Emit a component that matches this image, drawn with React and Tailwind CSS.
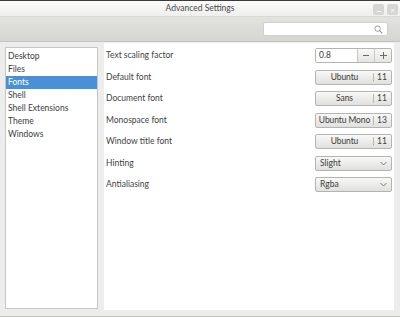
import { useState } from 'react'

const categories = ['Desktop', 'Files', 'Fonts', 'Shell', 'Shell Extensions', 'Theme', 'Windows']

const fontRows = [
  { label: 'Default font', name: 'Ubuntu', size: 11 },
  { label: 'Document font', name: 'Sans', size: 11 },
  { label: 'Monospace font', name: 'Ubuntu Mono', size: 13 },
  { label: 'Window title font', name: 'Ubuntu', size: 11 },
]

const btn = 'h-[15px] rounded-[2px] border border-[#b4b4b0] bg-gradient-to-b from-[#f8f8f7] to-[#e0e0de] text-[#3c3c3c]'

function Chevron() {
  return (
    <svg width="7" height="5" viewBox="0 0 7 5" className="text-[#7a7a7a]">
      <path d="M0.5 1 L3.5 4 L6.5 1" fill="none" stroke="currentColor" strokeWidth="1" />
    </svg>
  )
}

function Row({ label, children }) {
  return (
    <div className="flex items-center justify-between h-[15px]">
      <span className="text-[#3f3f3f]">{label}</span>
      {children}
    </div>
  )
}

export default function App() {
  const [selected, setSelected] = useState('Fonts')

  return (
    <div className="w-[400px] h-[317px] flex flex-col bg-[#ededed] text-[8.5px] text-[#3c3c3c] overflow-hidden" style={{ fontFamily: 'Lato, "Open Sans", sans-serif' }}>
      {/* title bar */}
      <div className="relative h-[16px] shrink-0 border-t border-[#3c3b37] bg-gradient-to-b from-[#fbfbfa] to-[#efefed] flex items-center justify-center">
        <span className="text-[#4a4a4a]">Advanced Settings</span>
        <div className="absolute right-[2px] top-[3px] flex gap-[3px]">
          <div className="w-[11px] h-[11px] rounded-[2px] bg-[#d6d6d3] flex items-end justify-center pb-[3px]">
            <div className="w-[4px] h-[1px] bg-white" />
          </div>
          <div className="w-[11px] h-[11px] rounded-[2px] bg-[#d6d6d3] flex items-center justify-center text-white text-[8px] leading-none">×</div>
        </div>
      </div>

      {/* toolbar */}
      <div className="h-[26px] shrink-0 border-t border-[#d9d9d6] border-b border-b-[#c4c4c0] bg-gradient-to-b from-[#e2e2df] to-[#d5d5d1] flex items-center justify-end pr-[12px]">
        <div className="w-[125px] h-[14px] rounded-[2px] bg-white border border-[#d0d0cc] flex items-center justify-end pr-[4px]">
          <svg width="9" height="9" viewBox="0 0 9 9">
            <circle cx="3.6" cy="3.6" r="2.7" fill="none" stroke="#9a9a9a" strokeWidth="1" />
            <path d="M5.6 5.6 L8.3 8.3" stroke="#9a9a9a" strokeWidth="1.2" />
          </svg>
        </div>
      </div>

      {/* content */}
      <div className="flex-1 flex pl-[5px] pr-[6px] pt-[1px] pb-[6px] gap-[6px] border-b border-[#c0c0bc]">
        <div className="w-[93px] mt-[4px] mb-[1px] bg-white border border-[#c6c6c2] pt-[2px]">
          {categories.map(c => (
            <div key={c} onClick={() => setSelected(c)}
              className={`h-[13px] flex items-center pl-[2px] ${selected === c ? 'bg-[#4a90d9] text-white' : 'text-[#3c3c3c]'}`}>
              {c}
            </div>
          ))}
        </div>

        <div className="flex-1 bg-white pt-[5px] pl-[2px] pr-[2px] flex flex-col gap-[6.5px]">
          <Row label="Text scaling factor">
            <div className="w-[77px] h-[15px] flex rounded-[2px] border border-[#b4b4b0] overflow-hidden">
              <div className="flex-1 bg-white flex items-center pl-[3px]">0.8</div>
              <div className="w-[17px] border-l border-[#c8c8c4] bg-gradient-to-b from-[#f8f8f7] to-[#e4e4e2] flex items-center justify-center">
                <div className="w-[6px] h-[1px] bg-[#6a6a6a]" />
              </div>
              <div className="w-[17px] border-l border-[#c8c8c4] bg-gradient-to-b from-[#f8f8f7] to-[#e4e4e2] flex items-center justify-center relative">
                <div className="w-[7px] h-[1px] bg-[#6a6a6a]" />
                <div className="absolute w-[1px] h-[7px] bg-[#6a6a6a]" />
              </div>
            </div>
          </Row>

          {fontRows.map(r => (
            <Row key={r.label} label={r.label}>
              <div className={`w-[77px] flex items-center ${btn}`}>
                <span className="flex-1 text-center whitespace-nowrap tracking-[-0.1px]">{r.name}</span>
                <span className="w-[18px] border-l border-[#b8b8b4] h-[9px] flex items-center pl-[3px]">{r.size}</span>
              </div>
            </Row>
          ))}

          <Row label="Hinting">
            <div className={`w-[77px] flex items-center justify-between pl-[4px] pr-[4px] ${btn}`}>
              <span>Slight</span>
              <Chevron />
            </div>
          </Row>

          <Row label="Antialiasing">
            <div className={`w-[77px] flex items-center justify-between pl-[4px] pr-[4px] ${btn}`}>
              <span>Rgba</span>
              <Chevron />
            </div>
          </Row>
        </div>
      </div>
    </div>
  )
}
